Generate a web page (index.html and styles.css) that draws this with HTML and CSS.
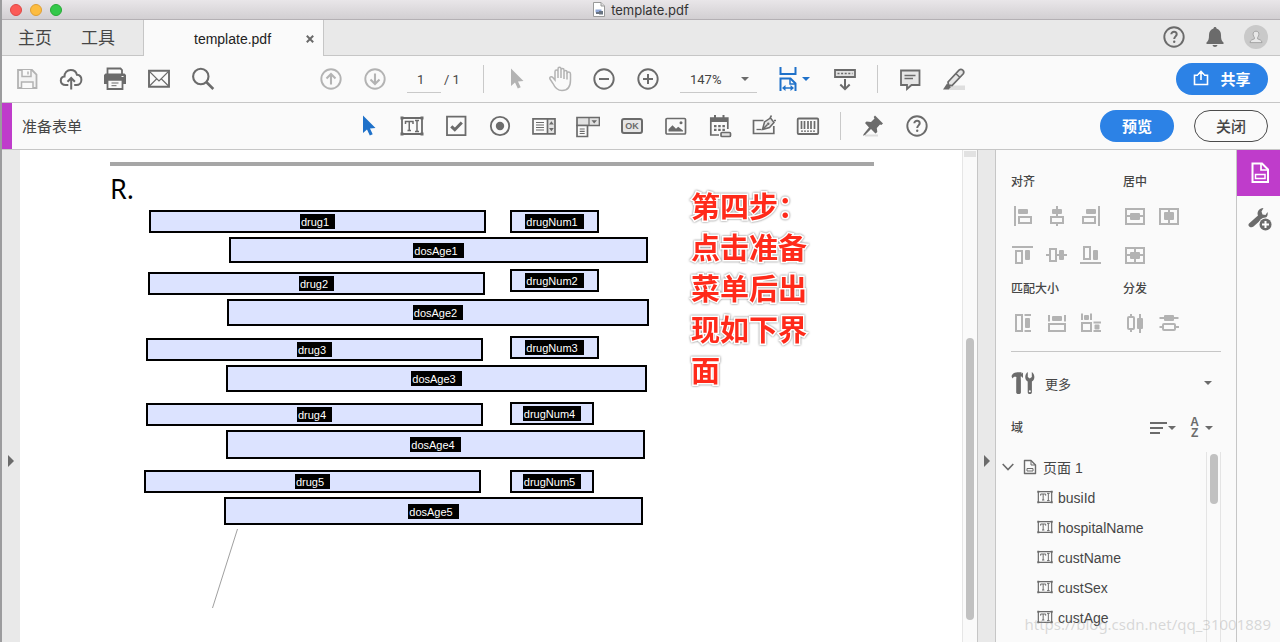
FILE: index.html
```html
<!DOCTYPE html>
<html lang="zh-CN">
<head>
<meta charset="utf-8">
<title>template.pdf</title>
<link rel="stylesheet" href="styles.css">
</head>
<body>
<svg class="defs" aria-hidden="true">
  <symbol id="ti" viewBox="0 0 24 24">
    <path d="M2 4h20v16H2z" fill="none" stroke="currentColor" stroke-width="1.800"/>
    <path d="M.5 2.500h3v3h-3zM20.500 2.500h3v3h-3zM.5 18.500h3v3h-3zM20.500 18.500h3v3h-3z" fill="currentColor"/>
    <path d="M5.500 10V7.500h7.500V10M9.250 7.500v9M7.500 16.500h3.500M15 6.500h4M17 6.500v11M15 17.500h4" fill="none" stroke="currentColor" stroke-width="1.500"/>
  </symbol>
  <symbol id="help" viewBox="0 0 24 24">
    <circle cx="12" cy="12" r="9.700" fill="none" stroke="currentColor" stroke-width="1.900"/>
    <path d="M9.300 9.300c0-3.300 5.400-3.200 5.400 0 0 2-2.500 2.200-2.500 4.700" fill="none" stroke="currentColor" stroke-width="2"/>
    <circle cx="12.200" cy="16.700" r="1.200" fill="currentColor"/>
  </symbol>
  <symbol id="pointer" viewBox="0 0 24 24">
    <path d="M7 1.500v17.500l4-3.500 2.800 6 2.900-1.300-2.700-5.800 5.500-.5z" fill="currentColor"/>
  </symbol>
</svg>
<div class="window">
  <header class="titlebar">
    <div class="lights"><button class="light red" aria-label="关闭窗口"></button><button class="light amber" aria-label="最小化"></button><button class="light green" aria-label="缩放窗口"></button></div>
    <div class="doc-title">
      <svg width="12" height="15" viewBox="0 0 12 15"><path d="M.5.5h7.500l3.500 3.500v10.500H.5z" fill="#fff" stroke="#999"/><path d="M8 .5V4h3.500" fill="#ddd" stroke="#999"/><path d="M2.500 7.500h6v3h-6z" fill="#8fa6d6"/><path d="M3 10h3v2H3zM6 9h4v3.500H6z" fill="#6a7482"/></svg>
      <span>template.pdf</span>
    </div>
  </header>

  <nav class="tabs">
    <div class="tabs-main"><button>主页</button><button>工具</button></div>
    <div class="tab"><span>template.pdf</span><button class="tab-close" aria-label="关闭标签"><svg width="8" height="8" viewBox="0 0 8 8"><path d="M.8.8l6.400 6.400M7.200.8L.8 7.200" stroke="#6a6a6a" stroke-width="2"/></svg></button></div>
    <div class="tabs-user">
      <button aria-label="帮助"><svg width="24" height="24"><use href="#help"/></svg></button>
      <button aria-label="通知"><svg width="24" height="24" viewBox="0 0 24 24"><path d="M12 2c1 0 1.500.7 1.500 1.600 3 .9 4.500 3.400 4.500 6.400 0 4 .6 6 2.500 7.500v1.500h-17v-1.500C5.400 16 6 14 6 10c0-3 1.500-5.500 4.500-6.400C10.500 2.700 11 2 12 2zM9.500 20h5c-.3 1.300-1.200 2-2.500 2s-2.200-.7-2.500-2z" fill="#6b6b6b"/></svg></button>
      <button aria-label="帐户"><svg width="24" height="24" viewBox="0 0 24 24"><circle cx="12" cy="12" r="12" fill="#c9c9c9"/><path d="M12 6.200c2 0 2.900 1.300 2.900 3 0 1.500-.8 2.500-1.300 3.200v1.500c1.500.7 4.400 1 4.400 3.700H6c0-2.700 2.900-3 4.400-3.700v-1.500c-.5-.7-1.300-1.700-1.300-3.200 0-1.700.9-3 2.900-3z" fill="#e8e8e8" stroke="#999" stroke-width=".8"/></svg></button>
    </div>
  </nav>

  <div class="bar">
    <div class="bar-side">
      <button class="tool faint" aria-label="保存"><svg width="24" height="24" viewBox="0 0 24 24"><path d="M3 3h14l4.500 4.500V21H3z" fill="#f4f4f4" stroke="currentColor" stroke-width="1.800"/><path d="M7 3v6.500h9V3M6.500 21v-6h11.500v6" fill="#fafafa" stroke="currentColor" stroke-width="1.500"/><path d="M13 4.500v3" stroke="currentColor" stroke-width="1.500"/></svg></button>
      <button class="tool" aria-label="上传"><svg width="24" height="24" viewBox="0 0 24 24"><path d="M9.300 18H6.500C3.500 18 1.800 16 1.800 13.700c0-2.400 1.700-4 3.700-4.200C5.400 5.800 8 3 11.700 3c3.200 0 5.500 1.800 6.200 4.700 2.600.2 4.500 2.200 4.500 5 0 3-2 5.300-5 5.300h-2.200" fill="none" stroke="currentColor" stroke-width="2"/><path d="M12.200 22.500v-11M8.500 14.800l3.700-3.800 3.700 3.800" fill="none" stroke="currentColor" stroke-width="2"/></svg></button>
      <button class="tool" aria-label="打印"><svg width="24" height="24" viewBox="0 0 24 24"><path d="M4.500 7V1.500h13L19 3v4" fill="none" stroke="currentColor" stroke-width="1.800"/><path d="M2.500 6.500h19l1.500 1.500v9H1V8z" fill="currentColor"/><path d="M4.500 12.800h15V22h-15z" fill="#fafafa" stroke="currentColor" stroke-width="1.800"/><path d="M8.500 16h7M8.500 18.700h5" stroke="currentColor"/><path d="M18.500 9.500h2" stroke="#fafafa"/></svg></button>
      <button class="tool" aria-label="电子邮件"><svg width="24" height="24" viewBox="0 0 24 24"><path d="M2 3.800h20v16H2z" fill="none" stroke="currentColor" stroke-width="1.900"/><path d="M2.500 4.500L12 14l9.500-9.500M2.500 19l7-7M21.500 19l-7-7" fill="none" stroke="currentColor" stroke-width="1.100"/></svg></button>
      <button class="tool" aria-label="查找"><svg width="24" height="24" viewBox="0 0 24 24"><circle cx="9.800" cy="9.500" r="7.700" fill="none" stroke="currentColor" stroke-width="2.100"/><path d="M15.300 15l7 7" stroke="currentColor" stroke-width="2.600"/></svg></button>
    </div>
    <div class="bar-center">
      <button class="tool faint" aria-label="上一页"><svg width="24" height="24" viewBox="0 0 24 24"><circle cx="12" cy="12" r="9.700" fill="none" stroke="currentColor" stroke-width="1.900"/><path d="M12 17.500V7M7.500 11.500L12 7l4.500 4.500" fill="none" stroke="currentColor" stroke-width="2.100"/></svg></button>
      <button class="tool faint" aria-label="下一页"><svg width="24" height="24" viewBox="0 0 24 24"><circle cx="12" cy="12" r="9.700" fill="none" stroke="currentColor" stroke-width="1.900"/><path d="M12 6.500V17M7.500 12.500L12 17l4.500-4.500" fill="none" stroke="currentColor" stroke-width="2.100"/></svg></button>
      <input class="page-input" aria-label="页码" value="1">
      <span class="page-total">/ 1</span>
      <span class="sep"></span>
      <button class="tool faint" aria-label="选择"><svg width="24" height="24"><use href="#pointer"/></svg></button>
      <button class="tool faint" aria-label="手形"><svg width="24" height="26" viewBox="0 0 24 26"><path d="M7 14V5.500c0-2 3-2 3 0V12 3c0-2.200 3-2.200 3 0v9V4c0-2 3-2 3 0v9V6c0-2 3-2 3 0v1.500c0-2 3.500-2 3.500.5v6c0 6-2.500 10.500-8.500 10.500-5 0-7-2.500-9-7l-3-4.500c-1-2 1.500-3 2.800-1.500L7 14z" fill="none" stroke="currentColor" stroke-width="1.500"/><path d="M19 7v6.500" stroke="currentColor" stroke-width="1.500"/></svg></button>
      <button class="tool" aria-label="缩小"><svg width="24" height="24" viewBox="0 0 24 24"><circle cx="12" cy="12" r="9.700" fill="none" stroke="currentColor" stroke-width="1.900"/><path d="M7 12h10" stroke="currentColor" stroke-width="2"/></svg></button>
      <button class="tool" aria-label="放大"><svg width="24" height="24" viewBox="0 0 24 24"><circle cx="12" cy="12" r="9.700" fill="none" stroke="currentColor" stroke-width="1.900"/><path d="M7 12h10M12 7v10" stroke="currentColor" stroke-width="2"/></svg></button>
      <label class="zoom"><select aria-label="缩放比例"><option>147%</option></select><span class="caret"></span></label>
      <button class="tool fit" aria-label="适合宽度"><svg width="20" height="26" viewBox="0 0 20 26"><path d="M2.500 1v7h15V1M2.500 25V12.500h10l5 5V25" fill="none" stroke="currentColor" stroke-width="2"/><path d="M12 12.500V18h5.500" fill="none" stroke="currentColor" stroke-width="1.500"/><path d="M4 22l3.500-3v2.200h5V19l3.500 3-3.500 3v-2.200h-5V25z" fill="currentColor"/></svg><span class="caret"></span></button>
      <button class="tool" aria-label="滚动"><svg width="24" height="24" viewBox="0 0 24 24"><path d="M2 3h20v7H2z" fill="#e2e2e2" stroke="currentColor" stroke-width="1.800"/><path d="M4.500 6.500h15" stroke="currentColor" stroke-width="1.700" stroke-dasharray="2 1.600"/><path d="M12 12v10M7.300 17.500L12 22.200l4.700-4.700" fill="none" stroke="currentColor" stroke-width="2"/></svg></button>
      <span class="sep"></span>
      <button class="tool" aria-label="添加附注"><svg width="24" height="24" viewBox="0 0 24 24"><path d="M3 3.500h18.500v14.500h-8l-4.500 4v-4H3z" fill="#e6e6e6" stroke="currentColor" stroke-width="1.800"/><path d="M6.500 8.500h11M6.500 11.500h8.500" stroke="currentColor" stroke-width="1.300"/></svg></button>
      <button class="tool" aria-label="高亮文本"><svg width="24" height="24" viewBox="0 0 24 24"><path d="M6 18.500h17v4.500H6z" fill="#dedede"/><path d="M6 15L17 3.200c2.600-2 6 .8 4.300 3.600L10 18.500l-3.500-.5z" fill="#e6e6e6" stroke="currentColor" stroke-width="1.700"/><path d="M14 6.700l3.800 3.600" stroke="currentColor" stroke-width="1.500"/><path d="M5 16.500l4 3.500-2.500 2.500H1z" fill="currentColor"/></svg></button>
    </div>
    <div class="bar-side end"><button class="pill blue share"><svg width="16" height="16" viewBox="0 0 16 16"><path d="M5 5.200H1.500v9.300h13V5.200H11M8 10V2M4.800 4.700L8 1.500l3.200 3.200" fill="none" stroke="#fff" stroke-width="1.600"/></svg>共享</button></div>
  </div>

  <div class="bar form-bar">
    <div class="bar-side"><h1>准备表单</h1></div>
    <div class="bar-center">
      <button class="tool active" aria-label="选择对象"><svg width="24" height="24"><use href="#pointer"/></svg></button>
      <button class="tool" aria-label="文本域"><svg width="24" height="24"><use href="#ti"/></svg></button>
      <button class="tool" aria-label="复选框"><svg width="24" height="24" viewBox="0 0 24 24"><path d="M3 2.700h18.500v18.500H3z" fill="none" stroke="currentColor" stroke-width="1.800"/><path d="M7.300 12.300l3.500 3.400 7-7.200" fill="none" stroke="currentColor" stroke-width="3"/></svg></button>
      <button class="tool" aria-label="单选按钮"><svg width="24" height="24" viewBox="0 0 24 24"><circle cx="12" cy="12" r="9.200" fill="none" stroke="currentColor" stroke-width="1.800"/><circle cx="12" cy="12" r="4.200" fill="currentColor"/></svg></button>
      <button class="tool" aria-label="列表框"><svg width="24" height="24" viewBox="0 0 24 24"><path d="M16 5h7v15h-7z" fill="#e2e2e2"/><path d="M1 4.800h22v15H1zM15.500 5v15" fill="none" stroke="currentColor" stroke-width="1.700"/><path d="M4 8.500h8M4 11h8M4 13.500h8M4 16h8" stroke="currentColor" stroke-width="1.100"/><path d="M17 10.500l2.400-3.200 2.400 3.200zM17 14l2.400 3.200 2.400-3.200z" fill="currentColor"/></svg></button>
      <button class="tool" aria-label="下拉列表"><svg width="24" height="24" viewBox="0 0 24 24"><path d="M1 3.500h22.500v8H1z" fill="#e2e2e2" stroke="currentColor" stroke-width="1.700"/><path d="M1 11.500h10.500v11H1z" fill="#fafafa" stroke="currentColor" stroke-width="1.700"/><path d="M13 3.500v8M3.700 15h5M3.700 17.300h5M3.700 19.500h5" stroke="currentColor" stroke-width="1.200"/><path d="M15.500 6.300h5.500L18.200 9.500z" fill="currentColor"/></svg></button>
      <button class="tool" aria-label="按钮"><span class="ok-icon">OK</span></button>
      <button class="tool" aria-label="图像"><svg width="24" height="24" viewBox="0 0 24 24"><rect x="2" y="4.500" width="19.500" height="15.500" rx="1" fill="none" stroke="currentColor" stroke-width="1.700"/><path d="M4.500 17.500v-2.300l4-4 3.500 3.500 2.200-2 4.800 3.800v1z" fill="currentColor"/><circle cx="17" cy="8.800" r="1.500" fill="currentColor"/></svg></button>
      <button class="tool" aria-label="日期"><svg width="24" height="24" viewBox="0 0 24 24"><path d="M11 21H2.800V4h17v11" fill="none" stroke="currentColor" stroke-width="1.700"/><path d="M2.800 4h17v4h-17z" fill="currentColor"/><path d="M7 1v5M15.500 1v5" stroke="currentColor" stroke-width="2"/><path d="M6 12.200h11M6 15.800h11" stroke="currentColor" stroke-width="2.200" stroke-dasharray="2.500 1.700"/><rect x="13" y="18.500" width="9.500" height="4" rx="1" fill="#e2e2e2" stroke="currentColor" stroke-width="1.700"/></svg></button>
      <button class="tool" aria-label="数字签名"><svg width="24" height="24" viewBox="0 0 24 24"><path d="M11.500 6.500H1.500v13h20.300V12" fill="none" stroke="currentColor" stroke-width="1.700"/><path d="M4.500 15.500h5" stroke="currentColor" stroke-width="1.300"/><path d="M10.500 15.500L12.500 8l6-4 3.500 4.500-4.500 5zM10.500 15.500l5-5M18 4l1.500-2.500M22 6.500h2" fill="#e6e6e6" stroke="currentColor" stroke-width="1.500"/><circle cx="16.300" cy="9.800" r="1.200" fill="currentColor"/></svg></button>
      <button class="tool" aria-label="条形码"><svg width="24" height="24" viewBox="0 0 24 24"><rect x="1.700" y="4.500" width="20.500" height="15.500" rx="1" fill="none" stroke="currentColor" stroke-width="1.800"/><path d="M5.500 7v8M8.500 7v8M12 7v8M15 7v8M18.500 7v8" stroke="currentColor" stroke-width="1.700"/><path d="M5 17.200h14" stroke="currentColor" stroke-width="1.300" stroke-dasharray="2 1"/></svg></button>
      <span class="sep"></span>
      <button class="tool" aria-label="固定"><svg width="24" height="24" viewBox="0 0 24 24"><path d="M4 20.500h13v2H4z" fill="#dedede"/><path d="M14 1.500l8 8-1.700 1.500-1.300-.5-3.200 3.500.5 4-1.800 1.500-4.500-4.500L4 21l-2 .7L2.700 20 8 13.500 4 9l1.500-1.500 4.500.5 3.500-3.500-.8-1.500z" fill="currentColor"/></svg></button>
      <button class="tool" aria-label="帮助"><svg width="24" height="24"><use href="#help"/></svg></button>
    </div>
    <div class="bar-side end"><button class="pill blue">预览</button><button class="pill outline">关闭</button></div>
  </div>

  <main class="work">
    <button class="rail" aria-label="展开左侧窗格"><span class="tri"></span></button>
    <section class="page">
      <hr class="page-rule">
      <p class="rx">R.</p>
      <div class="field drug1"><span>drug1</span></div><div class="field num1"><span>drugNum1</span></div><div class="field dos1"><span>dosAge1</span></div>
      <div class="field drug2"><span>drug2</span></div><div class="field num2"><span>drugNum2</span></div><div class="field dos2"><span>dosAge2</span></div>
      <div class="field drug3"><span>drug3</span></div><div class="field num3"><span>drugNum3</span></div><div class="field dos3"><span>dosAge3</span></div>
      <div class="field drug4"><span>drug4</span></div><div class="field num4"><span>drugNum4</span></div><div class="field dos4"><span>dosAge4</span></div>
      <div class="field drug5"><span>drug5</span></div><div class="field num5"><span>drugNum5</span></div><div class="field dos5"><span>dosAge5</span></div>
      <svg class="slash" width="28" height="80" viewBox="0 0 28 80"><path d="M26.500 0L1.500 79" stroke="#a0a0a0" stroke-width="1"/></svg>
      <p class="note">第四步：<br>点击准备<br>菜单后出<br>现如下界<br>面</p>
    </section>
    <div class="page-scroll"><span class="split-handle"></span><span class="thumb"></span></div>
    <button class="rail right" aria-label="折叠右侧窗格"><span class="tri"></span></button>
    <aside class="panel">
      <div class="groups">
        <section><h2>对齐</h2>
          <div class="icons">
            <button aria-label="左对齐"><svg width="24" height="24" viewBox="0 0 24 24"><path d="M4 2v20" class="s"/><rect x="7" y="5" width="10" height="5" rx="1" class="f"/><rect x="8" y="13" width="12" height="6" class="s"/></svg></button>
            <button aria-label="垂直居中对齐"><svg width="24" height="24" viewBox="0 0 24 24"><path d="M12 2v11M12 19v3" class="s"/><rect x="7" y="5" width="10" height="5" rx="1" class="f"/><rect x="6" y="13" width="12" height="6" class="s"/></svg></button>
            <button aria-label="右对齐"><svg width="24" height="24" viewBox="0 0 24 24"><path d="M20 2v20" class="s"/><rect x="7" y="5" width="10" height="5" rx="1" class="f"/><rect x="4" y="13" width="12" height="6" class="s"/></svg></button>
            <button aria-label="顶端对齐"><svg width="24" height="24" viewBox="0 0 24 24"><path d="M1 4h21" class="s"/><rect x="5" y="8" width="6" height="12" class="s"/><rect x="14" y="7" width="5" height="10" rx="1" class="f"/></svg></button>
            <button aria-label="水平居中对齐"><svg width="24" height="24" viewBox="0 0 24 24"><path d="M1 12h4M11 12h11" class="s"/><rect x="5" y="6" width="6" height="12" class="s"/><rect x="14" y="7" width="5" height="10" rx="1" class="f"/></svg></button>
            <button aria-label="底端对齐"><svg width="24" height="24" viewBox="0 0 24 24"><path d="M1 20h21" class="s"/><rect x="5" y="4" width="6" height="12" class="s"/><rect x="14" y="7" width="5" height="10" rx="1" class="f"/></svg></button>
          </div>
        </section>
        <section><h2>居中</h2>
          <div class="icons">
            <button aria-label="垂直居中"><svg width="24" height="24" viewBox="0 0 24 24"><rect x="3" y="5" width="18" height="15" class="s"/><path d="M3 12h18" class="s"/><rect x="7" y="9" width="10" height="7" rx="1" class="f"/></svg></button>
            <button aria-label="水平居中"><svg width="24" height="24" viewBox="0 0 24 24"><rect x="3" y="5" width="18" height="15" class="s"/><path d="M12 5v14" class="s"/><rect x="7" y="8" width="10" height="8" rx="1" class="f"/></svg></button>
            <button class="next-row" aria-label="双向居中"><svg width="24" height="24" viewBox="0 0 24 24"><rect x="3" y="5" width="18" height="15" class="s"/><path d="M3 12h18M12 5v14" class="s"/><rect x="7" y="9" width="10" height="7" rx="1" class="f"/></svg></button>
          </div>
        </section>
        <section><h2>匹配大小</h2>
          <div class="icons">
            <button aria-label="匹配高度"><svg width="24" height="24" viewBox="0 0 24 24"><rect x="5" y="4" width="6" height="16" class="s"/><path d="M13.500 4h6.500M13.500 20h6.500" class="s"/><rect x="14" y="7" width="5" height="10" rx="1" class="f"/></svg></button>
            <button aria-label="匹配宽度"><svg width="24" height="24" viewBox="0 0 24 24"><path d="M4 4v6.500M20 4v6.500" class="s"/><rect x="7" y="5" width="10" height="5" rx="1" class="f"/><rect x="4" y="13" width="16" height="7" class="s"/></svg></button>
            <button aria-label="匹配宽度和高度"><svg width="24" height="24" viewBox="0 0 24 24"><path d="M3 2.500V9M12 2.500V9M14.500 11.500h7.500M14.500 20h7.500" class="s"/><rect x="5" y="4" width="5" height="5" rx="1" class="f"/><rect x="3" y="12" width="9" height="8" class="s"/><rect x="15.500" y="13.500" width="5" height="5" rx="1" class="f"/></svg></button>
          </div>
        </section>
        <section><h2>分发</h2>
          <div class="icons">
            <button aria-label="水平分发"><svg width="24" height="24" viewBox="0 0 24 24"><path d="M8 3v3M8 18v3M17 3v19" class="s"/><rect x="5" y="6" width="6" height="12" rx="1" class="s"/><rect x="14" y="7" width="6" height="11" rx="1" class="f"/></svg></button>
            <button aria-label="垂直分发"><svg width="24" height="24" viewBox="0 0 24 24"><path d="M2.500 7h19M2.500 16h3M19 16h3" class="s"/><rect x="7" y="4" width="10" height="6" rx="1" class="f"/><rect x="6" y="13" width="12" height="6" rx="1" class="s"/></svg></button>
          </div>
        </section>
      </div>
      <button class="more">
        <svg width="24" height="24" viewBox="0 0 24 24"><path d="M.5 5C1.500 2.300 4 1.300 7 1.300h3.500v1.500l1.500-1.300v5.500L10.500 5.500H9.700l.2 4v12c0 2-4.700 2-4.700 0v-12l.2-3.500C3.500 5.500 2.500 6 1.300 7.500z" fill="#6b6b6b"/><path d="M16.700 10.500C13.500 9 13.300 3.500 16.800 1v5l2 1.500 2-1.500V1c3.500 2.500 3.300 8 .1 9.500v10.700c0 2.500-4.200 2.500-4.200 0z" fill="#6b6b6b"/><circle cx="18.800" cy="20.300" r="1" fill="#fff"/></svg>
        <span>更多</span><i class="caret"></i>
      </button>
      <div class="fields-head"><h2>域</h2>
        <button aria-label="顺序"><svg width="17" height="14" viewBox="0 0 17 14"><path d="M0 2h17M0 7h13M0 12h10" stroke="#6b6b6b" stroke-width="2"/></svg><i class="caret"></i></button>
        <button aria-label="排序"><span class="az"><b>A</b><b>Z</b></span><i class="caret"></i></button>
      </div>
      <div class="tree-wrap">
        <ul class="tree">
          <li class="root"><svg width="12" height="8" viewBox="0 0 12 8"><path d="M.7 1L6 6.500 11.300 1" fill="none" stroke="#6b6b6b" stroke-width="1.600"/></svg><svg class="file" width="14" height="16" viewBox="0 0 14 16"><path d="M1.500 1.500h6.500L12.500 6v8.500h-11z" fill="none" stroke="#6b6b6b" stroke-width="1.400" stroke-linejoin="round"/><path d="M8 1.500V6h4.500M4 9.500h6v2.500H4z" fill="none" stroke="#6b6b6b"/></svg><span>页面 1</span></li>
          <li><svg width="16" height="16"><use href="#ti"/></svg><span>busiId</span></li>
          <li><svg width="16" height="16"><use href="#ti"/></svg><span>hospitalName</span></li>
          <li><svg width="16" height="16"><use href="#ti"/></svg><span>custName</span></li>
          <li><svg width="16" height="16"><use href="#ti"/></svg><span>custSex</span></li>
          <li><svg width="16" height="16"><use href="#ti"/></svg><span>custAge</span></li>
        </ul>
        <div class="tree-scroll"><span></span></div>
      </div>
    </aside>
    <nav class="side">
      <button class="on" aria-label="准备表单"><svg width="24" height="24" viewBox="0 0 24 24"><path d="M4.500 2.500h9.500l6 6V21H4.500z" fill="none" stroke="#fff" stroke-width="2"/><path d="M13 2.500V9h6.500" fill="none" stroke="#fff" stroke-width="1.700"/><rect x="7.500" y="13.500" width="9.500" height="4" fill="none" stroke="#fff" stroke-width="1.500"/></svg></button>
      <button aria-label="更多工具"><svg width="26" height="26" viewBox="0 0 26 26"><path d="M2 17.500L11 9.500C9.500 6 12 2.200 16.500 2L14.500 5.500l1 3 3 .5L20.500 6c1 4-1.500 7-5.500 7L6.500 20.500c-2.500 2-6.500-.5-4.500-3z" fill="#6b6b6b"/><circle cx="18.500" cy="18.500" r="7" fill="#fafafa"/><circle cx="18.500" cy="18.500" r="6" fill="#6b6b6b"/><path d="M18.500 15v7M15 18.500h7" stroke="#fff" stroke-width="2"/></svg></button>
    </nav>
    <p class="watermark">https://blog.csdn.net/qq_31001889</p>
  </main>
</div>
</body>
</html>
```
FILE: styles.css
```css
* { box-sizing: border-box; }
body { margin: 0; font-family: "Liberation Sans", "Noto Sans CJK SC", sans-serif; font-size: 14px; color: #464646; background: #fff; }
h1, h2, p, ul { margin: 0; padding: 0; font-weight: 400; list-style: none; }
button { margin: 0; padding: 0; border: 0; background: none; color: inherit; font: inherit; display: flex; align-items: center; justify-content: center; }
svg { display: block; flex: none; }
.defs { position: absolute; width: 0; height: 0; }
.window { height: 100vh; display: flex; flex-direction: column; border-left: 2px solid #9c9c9e; overflow: hidden; }

.titlebar { flex: none; height: 20px; display: grid; grid-template-columns: 1fr auto 1fr; align-items: center; background: linear-gradient(#e9e6e9, #d2cfd2); border-bottom: 1px solid #b4b0b4; }
.lights { display: flex; gap: 8px; padding-left: 8px; }
.light { width: 12px; height: 12px; border-radius: 50%; border: 1px solid; }
.red { background: #fc5b57; border-color: #df4744; }
.amber { background: #fdbc40; border-color: #de9f34; }
.green { background: #34c84a; border-color: #27aa35; }
.doc-title { display: flex; align-items: center; gap: 6px; font-family: Inter, sans-serif; font-size: 13px; line-height: 18px; color: #333; }

.tabs { flex: none; height: 36px; display: flex; background: #e9e9e9; }
.tabs-main { display: flex; gap: 29px; width: 141px; padding: 0 0 2px 16px; border-bottom: 1px solid #c6c6c6; font-size: 17px; }
.tab { display: flex; align-items: center; width: 181px; padding: 2px 9px 0 50px; border: solid #c6c6c6; border-width: 0 1px; background: #fafafa; color: #222; }
.tab-close { margin-left: auto; }
.tabs-user { flex: 1; display: flex; justify-content: flex-end; gap: 17px; padding: 0 12px 1px 0; border-bottom: 1px solid #c6c6c6; color: #6b6b6b; }

.bar { flex: none; height: 47px; display: grid; grid-template-columns: 1fr auto 1fr; padding-left: 3px; background: #fafafa; border-bottom: 1px solid #c6c6c6; }
.bar-side, .bar-center { display: flex; align-items: center; }
.end { justify-content: flex-end; gap: 20px; padding-right: 12px; }
.tool { width: 44px; height: 44px; color: #6b6b6b; }
.faint { color: #b3b3b3; }
.active, .fit { color: #1f71c9; }
.fit { gap: 4px; margin: 0 7px 0 15px; }
.sep { width: 1px; height: 28px; margin: 0 10px; background: #c9c9c9; }
.page-input { width: 34px; height: 28px; margin-left: 10px; padding: 2px 0 0 10px; border: 0; border-bottom: 1px solid #c9c9c9; background: none; color: #444; font: 13px Roboto, sans-serif; }
.page-total { width: 32px; padding-left: 3px; font: 13px Roboto, sans-serif; }
.zoom { display: flex; align-items: center; width: 77px; height: 28px; margin-left: 10px; padding-right: 8px; border-bottom: 1px solid #c9c9c9; }
.zoom select { flex: 1; appearance: none; border: 0; padding: 2px 0 0 10px; background: none; color: #444; font: 13px Roboto, sans-serif; }
.caret { flex: none; border: solid transparent; border-width: 4px 4px 0; border-top-color: #6b6b6b; }
.fit .caret { border-top-color: #1f71c9; }
.ok-icon { width: 22px; height: 16px; border: 2px solid #6b6b6b; border-radius: 3px; background: #e6e6e6; font: bold 9px/12px "Liberation Sans", sans-serif; text-align: center; }
.pill { width: 74px; height: 32px; padding-bottom: 2px; border-radius: 16px; font-size: 15px; font-weight: 700; }
.blue { background: #2c82e6; color: #fff; }
.outline { border: 1px solid #4b4b4b; font-weight: 500; }
.share { width: 92px; gap: 11px; }
.form-bar { box-shadow: inset 10px 0 #bf3ccb; }
.form-bar h1 { padding: 0 0 2px 17px; font-size: 15px; }

.work { flex: 1; min-height: 0; display: flex; position: relative; background: #fff; }
.rail { flex: none; width: 18px; align-items: flex-start; padding-top: 305px; background: #e9e9e9; }
.tri { border: solid transparent; border-width: 6px 0 6px 6px; border-left-color: #6b6b6b; }
.rail.right { width: 19px; border: solid #c6c6c6; border-width: 0 1px; }

.page { flex: 1; min-width: 0; position: relative; overflow: hidden; }
.page-rule { height: 4px; margin: 12px 88px 0 90px; border: 0; background: #a6a6a6; }
.rx { margin: 4px 0 0 90px; font: 27px/38px "Noto Sans", sans-serif; color: #000; }
.field { position: absolute; display: flex; align-items: center; justify-content: center; height: 23px; border: 2px solid #000; background: #dce3ff; }
.field span { padding: 1px 6px 0 1px; background: #000; color: #fff; font-size: 11px; line-height: 14px; }
.drug1 { left: 129px; top: 60px; width: 337px; }
.drug2 { left: 128px; top: 122px; width: 337px; }
.drug3 { left: 126px; top: 188px; width: 337px; }
.drug4 { left: 126px; top: 253px; width: 337px; }
.drug5 { left: 124px; top: 320px; width: 337px; }
.num1 { left: 490px; top: 60px; width: 89px; }
.num2 { left: 490px; top: 119px; width: 89px; }
.num3 { left: 490px; top: 186px; width: 89px; }
.num4 { left: 490px; top: 252px; width: 84px; }
.num5 { left: 490px; top: 320px; width: 84px; }
.dos1 { left: 209px; top: 87px; width: 419px; height: 26px; }
.dos2 { left: 207px; top: 149px; width: 422px; height: 27px; }
.dos3 { left: 206px; top: 215px; width: 421px; height: 27px; }
.dos4 { left: 206px; top: 280px; width: 419px; height: 29px; }
.dos5 { left: 204px; top: 347px; width: 419px; height: 28px; }
.slash { position: absolute; left: 191px; top: 379px; }
.note { position: absolute; left: 671px; top: 35px; color: #ff2a1a; font: 700 29px/41px "Noto Sans CJK SC", sans-serif; -webkit-text-stroke: 3px #fff; paint-order: stroke fill; filter: drop-shadow(0 0 1px #777); }

.page-scroll { flex: none; width: 15px; display: flex; flex-direction: column; align-items: center; padding-top: 1px; border-left: 1px solid #e6e6e6; background: #fafafa; }
.split-handle { width: 12px; height: 6px; background: #e2e2e2; }
.thumb { width: 8px; height: 282px; margin-top: 181px; border-radius: 4px; background: #c1c1c1; }

.panel { flex: none; width: 240px; display: flex; flex-direction: column; padding: 24px 15px 0; background: #fafafa; }
.panel h2 { font-size: 12px; line-height: 16px; font-weight: 500; }
.groups { display: grid; grid-template-columns: 112px 1fr; row-gap: 14px; padding-bottom: 16px; border-bottom: 1px solid #c6c6c6; }
.icons { display: grid; grid-template-columns: 24px 24px 24px; gap: 15px 10px; padding-top: 14px; }
.next-row { grid-column: 1; }
.s { fill: none; stroke: #b3b3b3; stroke-width: 2; }
.f { fill: #b3b3b3; }
.more { height: 62px; justify-content: flex-start; gap: 10px; font-size: 13px; }
.more .caret { margin: 0 9px 0 auto; }
.fields-head { height: 28px; display: flex; align-items: center; gap: 14px; }
.fields-head h2 { margin-right: auto; }
.fields-head button { gap: 1px; }
.fields-head button:last-child { gap: 6px; padding-right: 8px; }
.az { display: flex; flex-direction: column; font-size: 12px; line-height: 11px; color: #6b6b6b; }
.tree-wrap { flex: 1; min-height: 0; display: flex; margin: 10px 0 0 -9px; overflow: hidden; }
.tree { flex: 1; }
.tree li { display: flex; align-items: center; gap: 5px; height: 30px; padding-left: 35px; color: #464646; }
.tree li:not(.root) span { padding-top: 1px; }
.tree svg { color: #6b6b6b; }
.tree .root { gap: 6px; padding-left: 0; }
.tree .file { margin-left: 3px; }
.tree-scroll { width: 15px; padding: 2px 3px 0; border: solid #e4e4e4; border-width: 0 1px; }
.tree-scroll span { display: block; width: 8px; height: 50px; border-radius: 4px; background: #c1c1c1; }

.side { flex: none; width: 44px; border-left: 1px solid #c6c6c6; background: #fafafa; }
.side button { width: 100%; height: 46px; padding-left: 3px; }
.side .on { background: #bf3ccb; }
.watermark { position: absolute; right: 9px; bottom: 8px; font-family: "Noto Sans", sans-serif; font-size: 15px; line-height: 20px; color: rgba(150, 150, 150, .35); }
```
